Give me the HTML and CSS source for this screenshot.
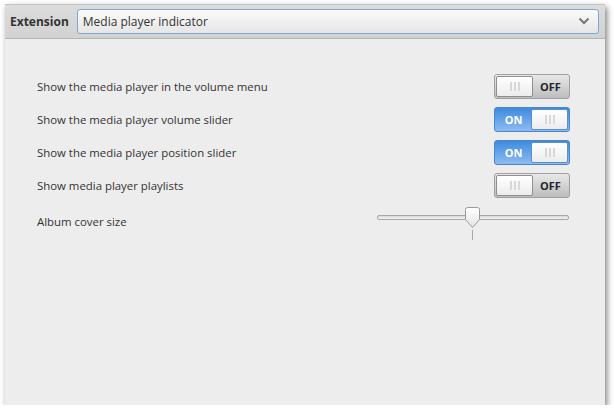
FILE: index.html
```html
<!DOCTYPE html>
<html>
<head>
<meta charset="utf-8">
<link rel="stylesheet" href="styles.css">
</head>
<body>
<div class="window">
  <div class="header">
    <span class="ext-label">Extension</span>
    <div class="combo">
      <span class="combo-text">Media player indicator</span>
      <svg class="chev" width="12" height="8" viewBox="0 0 12 8"><path d="M1.5 1.5 L6 6 L10.5 1.5" fill="none" stroke="#777" stroke-width="2"/></svg>
    </div>
  </div>
  <div class="content">
    <div class="row">
      <span class="label">Show the media player in the volume menu</span>
      <div class="switch off"><div class="knob"><i></i><i></i><i></i></div><span class="state">OFF</span></div>
    </div>
    <div class="row">
      <span class="label">Show the media player volume slider</span>
      <div class="switch on"><span class="state">ON</span><div class="knob"><i></i><i></i><i></i></div></div>
    </div>
    <div class="row">
      <span class="label">Show the media player position slider</span>
      <div class="switch on"><span class="state">ON</span><div class="knob"><i></i><i></i><i></i></div></div>
    </div>
    <div class="row">
      <span class="label">Show media player playlists</span>
      <div class="switch off"><div class="knob"><i></i><i></i><i></i></div><span class="state">OFF</span></div>
    </div>
    <div class="row slider-row">
      <span class="label">Album cover size</span>
      <div class="slider">
        <div class="track"></div>
        <svg class="thumb" width="17" height="22" viewBox="0 0 17 22"><defs><linearGradient id="tg" x1="0" y1="0" x2="0" y2="1"><stop offset="0" stop-color="#ffffff"/><stop offset="1" stop-color="#e4e4e4"/></linearGradient></defs><path d="M1.5 2.5 Q1.5 0.5 3.5 0.5 L13.5 0.5 Q15.5 0.5 15.5 2.5 L15.5 12.5 L8.5 20.5 L1.5 12.5 Z" fill="url(#tg)" stroke="#9a9a9a"/></svg>
        <div class="tick"></div>
      </div>
    </div>
  </div>
</div>
</body>
</html>
```

FILE: styles.css
```css
html, body {
  margin: 0;
  padding: 0;
  background: #ffffff;
}
body {
  font-family: "Open Sans", "DejaVu Sans", sans-serif;
  font-size: 12px;
  color: #333333;
}
.window {
  margin: 4px 0 0 5px;
  width: 600px;
  height: 401px;
  background: #ededed;
  box-shadow: 2px 3px 6px rgba(0, 0, 0, 0.5);
  display: flex;
  flex-direction: column;
}
.header {
  height: 35px;
  box-sizing: border-box;
  border-top: 1px solid #c4c4c4;
  border-bottom: 1px solid #b4b4b4;
  background: linear-gradient(#dcdcdc, #d2d2d2);
  display: flex;
  align-items: center;
  padding: 0 6px 0 5px;
  gap: 8px;
}
.ext-label {
  font-weight: bold;
  font-size: 12px;
  color: #333;
  margin-top: -1px;
}
.combo {
  flex: 1;
  height: 25px;
  box-sizing: border-box;
  border: 1px solid #7ea7d8;
  border-radius: 3px;
  background: linear-gradient(#fafafa, #e6e6e6);
  display: flex;
  align-items: center;
  justify-content: space-between;
  padding: 0 8px 0 5px;
  margin-top: -1px;
}
.combo-text {
  color: #333;
  font-size: 12px;
}
.chev {
  display: block;
}
.content {
  padding: 35px 35px 0 32px;
  display: flex;
  flex-direction: column;
  gap: 8px;
}
.row {
  display: flex;
  align-items: center;
  justify-content: space-between;
  height: 25px;
}
.label {
  font-size: 11.4px;
  color: #333;
}
.switch {
  width: 76px;
  height: 25px;
  box-sizing: border-box;
  border-radius: 3px;
  display: flex;
  align-items: stretch;
  padding: 1px;
}
.switch.off {
  border: 1px solid #a0a0a0;
  background: linear-gradient(#e8e8e8, #bdbdbd);
}
.switch.on {
  border: 1px solid #4a86cc;
  background: linear-gradient(#3d8ae0, #8ebcf0);
}
.knob {
  width: 37px;
  box-sizing: border-box;
  border: 1px solid #8f8f8f;
  border-radius: 2px;
  background: linear-gradient(#ffffff, #ececec);
  display: flex;
  align-items: center;
  justify-content: center;
  gap: 2px;
}
.switch.on .knob {
  border-color: #5a8fcf;
}
.knob i {
  display: block;
  width: 2px;
  height: 9px;
  background: #d8d8d8;
}
.state {
  flex: 1;
  display: flex;
  align-items: center;
  justify-content: center;
  font-weight: bold;
  font-size: 11px;
}
.switch.off .state {
  color: #1e2430;
}
.switch.on .state {
  color: #ffffff;
}
.slider-row {
  margin-top: 3px;
}
.slider {
  position: relative;
  width: 195px;
  height: 30px;
  margin-right: -1px;
  margin-top: 4px;
}
.track {
  position: absolute;
  left: 1px;
  right: 2px;
  top: 6px;
  height: 3px;
  border: 1px solid #a8a8a8;
  border-radius: 2px;
  background: linear-gradient(#d8d8d8, #f4f4f4);
}
.thumb {
  position: absolute;
  left: 88px;
  top: -2px;
}
.tick {
  position: absolute;
  left: 96px;
  top: 21px;
  width: 1px;
  height: 10px;
  background: #aaaaaa;
}
```
